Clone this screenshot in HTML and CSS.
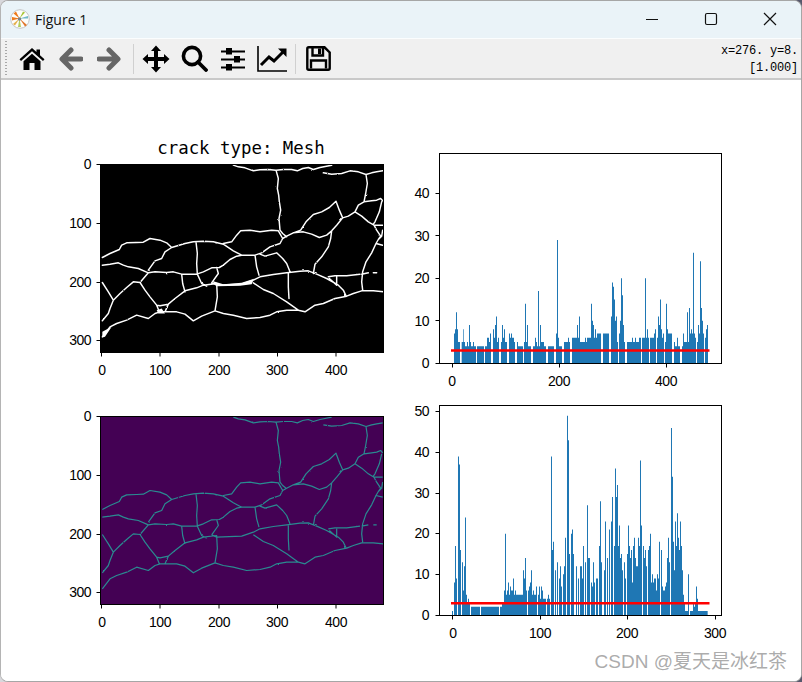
FILE: index.html
```html
<!DOCTYPE html>
<html lang="en">
<head>
<meta charset="utf-8">
<title>Figure 1</title>
<link rel="stylesheet" href="styles.css">
</head>
<body>
<div class="window">
  <header class="titlebar">
    <svg class="app-icon" width="20" height="20" viewBox="0 0 20 20">
      <circle cx="10" cy="10" r="9.3" fill="#fdfdfb" stroke="#c4c4c4"/>
      <path d="M9.5 9.5L6 2.5L3.5 4.5zM9.5 9.5L2 8L2 11.5z" fill="#ee7a1c"/>
      <path d="M9.5 9.5L13 2.5L15 3.5z" fill="#a9c639"/>
      <path d="M9.5 9.5L18 7L18 9.5z" fill="#6fb8c9"/>
      <path d="M9.5 9.5L17 16L15 17.5z" fill="#e0762c"/>
      <path d="M9.5 9.5L11 18L8 18z" fill="#b3cb5a"/>
      <path d="M9.5 9.5L3 15L5 16.5z" fill="#e5b04a"/>
      <circle cx="9.5" cy="10" r="1.8" fill="#77808a"/>
    </svg>
    <span class="title">Figure 1</span>
    <div class="controls">
      <svg class="ctl" width="14" height="14" viewBox="0 0 14 14"><path d="M1 7.5H13" class="ctl-line"/></svg>
      <svg class="ctl" width="14" height="14" viewBox="0 0 14 14"><rect x="1.5" y="1.5" width="11" height="11" rx="1.5" class="ctl-line"/></svg>
      <svg class="ctl" width="14" height="14" viewBox="0 0 14 14"><path d="M1 1L13 13M13 1L1 13" class="ctl-line"/></svg>
    </div>
  </header>
  <div class="toolbar">
    <span class="grip"></span>
    <button class="tool" aria-label="Home"><svg width="26" height="24" viewBox="0 0 26 24"><path d="M13 1L0.5 12.2L2 14L13 4.2L24 14L25.5 12.2L21 8.2V2.5H17.5V5.1zM4.5 14.3V23H10.5V16H15.5V23H21.5V14.3L13 6.7z" fill="#000"/></svg></button>
    <button class="tool" aria-label="Back"><svg width="24" height="24" viewBox="0 0 24 24"><path d="M12 3L3 12L12 21M4 12H22" class="arrow"/></svg></button>
    <button class="tool" aria-label="Forward"><svg width="24" height="24" viewBox="0 0 24 24"><path d="M12 3L21 12L12 21M20 12H2" class="arrow"/></svg></button>
    <span class="sep"></span>
    <button class="tool" aria-label="Pan"><svg width="28" height="28" viewBox="0 0 28 28"><path d="M14 0.5L19 6H16V12H22V9L27.5 14L22 19V16H16V22H19L14 27.5L9 22H12V16H6V19L0.5 14L6 9V12H12V6H9z" fill="#000"/></svg></button>
    <button class="tool" aria-label="Zoom"><svg width="27" height="27" viewBox="0 0 27 27"><circle cx="11" cy="11" r="8.6" fill="none" stroke="#000" stroke-width="3.6"/><path d="M17 17L25 25" stroke="#000" stroke-width="3.8" stroke-linecap="round"/></svg></button>
    <button class="tool" aria-label="Subplots"><svg width="26" height="24" viewBox="0 0 26 24"><path d="M1 4.5H25M1 12.5H25M1 20.5H25" stroke="#000" stroke-width="2"/><rect x="6" y="1" width="6" height="6.5" fill="#000"/><rect x="14" y="9" width="6" height="6.5" fill="#000"/><rect x="6" y="17" width="6" height="6.5" fill="#000"/></svg></button>
    <button class="tool" aria-label="Axes"><svg width="30" height="26" viewBox="0 0 30 26"><path d="M1 0V25H30" fill="none" stroke="#000" stroke-width="1.6"/><path d="M4 19L12 11L17 15L27 5" fill="none" stroke="#000" stroke-width="3"/><path d="M21 2.5H29.5V11z" fill="#000"/></svg></button>
    <span class="sep"></span>
    <button class="tool" aria-label="Save"><svg width="25" height="25" viewBox="0 0 25 25"><path d="M2.8 1.3H18.5L23.7 6.5V22.2Q23.7 23.7 22.2 23.7H2.8Q1.3 23.7 1.3 22.2V2.8Q1.3 1.3 2.8 1.3z" fill="none" stroke="#000" stroke-width="2.4"/><path d="M6.5 2V9.5H17V2" fill="none" stroke="#000" stroke-width="2.4"/><rect x="12" y="2.5" width="3" height="5.5" fill="#000"/><path d="M5 22.5V14.5H20V22.5" fill="none" stroke="#000" stroke-width="2.4"/></svg></button>
    <div class="readout">x=276. y=8.
[1.000]</div>
  </div>
  <main class="canvas">
    <svg class="figure" width="800" height="601" viewBox="1 80 800 601">
      <defs>
        <filter id="rough" filterUnits="userSpaceOnUse" x="123" y="102" width="849" height="566">
          <feTurbulence type="fractalNoise" baseFrequency="0.08" numOctaves="2" seed="4"/>
          <feDisplacementMap in="SourceGraphic" scale="5" xChannelSelector="R" yChannelSelector="G"/>
        </filter>
        <path id="cracks" d="M520 105L535 110L555 113L580 122L600 119L625 118L648 120L670 118L695 118L712 122L728 115L745 112L760 118L780 112L815 105
          M648 120L655 145L652 175L656 195L658 215L662 240L657 265L660 300L668 310L680 320
          M790 128L815 132L845 130L870 122L895 125L918 133L935 128L950 125L968 122
          M918 133L922 160L917 190L912 215L895 225L885 245M912 215L935 212L950 210L962 205L968 212M965 215L958 245L945 275L940 282
          M885 245L905 258L925 275L942 285L968 285M942 285L950 300L962 318L955 328L948 340L968 345M968 300L965 318L955 328
          M948 340L935 368L918 395L908 425L905 455L908 480
          M680 318L700 308L722 300L738 275L760 253L785 245L808 232L828 213L838 240L848 263L865 258L885 245
          M848 263L830 285L815 302L800 315L778 322L755 312L730 305L700 308
          M815 302L812 325L805 350L785 380L765 402L760 430
          M490 340L515 335L530 315L542 302L570 300L600 305L635 300L655 302L668 325L680 318
          M668 325L660 340L630 350L605 368L585 375L545 375L520 362L490 342L460 335L430 333L400 335L375 340L335 352L315 365L305 385L285 392L265 420
          M127 382L150 370L178 358L185 345L200 338L230 337L250 336L270 325L300 330L320 338L335 352
          M408 335L412 370L410 400L412 432L425 460L440 468
          M127 405L150 402L175 398L190 405L205 410L235 415L265 428L285 425L320 427L340 425L365 432L410 432L430 425L455 413L478 412L490 405L510 388L530 378L545 375
          M470 412L475 430L455 458M365 432L368 460L375 485
          M265 428L240 457L220 455L200 472L180 490L160 510L150 535L145 550L127 572M127 457L145 485L160 510
          M240 457L255 480L270 500L290 525L300 527L325 522L345 505L375 482L410 473L430 465L470 460L472 500L465 542
          M455 458L470 465L545 462L580 450L600 440L640 433L680 428L720 423L745 422L770 432L800 445L835 465L850 480L858 497
          M585 375L590 410L597 435M600 372L615 378L650 368L668 385L680 400L690 425M685 428L685 470L687 505
          M580 458L610 478L640 490L680 515L715 540
          M127 620L150 590L170 580L200 570L230 555L265 565L285 550L300 545L350 545L375 552L400 572L425 558L465 542L490 550L520 555L560 565L600 562L630 555L650 545L680 540L715 540L735 545L765 525L790 520L825 505L860 498L880 490L905 482L940 482L970 485
          M290 525L298 545M325 522L315 545M805 440L825 437L860 437L900 432M808 445L830 465L830 440M905 432L925 428M940 428L950 428"/>
      </defs>

      <text class="plot-title" x="241" y="154" text-anchor="middle">crack type: Mesh</text>

      <!-- Top image -->
      <svg x="101" y="164" width="283" height="189" viewBox="123 102 849 566">
        <rect x="123" y="102" width="849" height="566" fill="#000"/>
        <g filter="url(#rough)">
          <use href="#cracks" class="crack-white"/>
        </g>
        <path d="M455 452L490 462L545 458L582 446L575 462L540 467L470 468zM127 605L155 590L135 620L127 622zM290 540L305 535L315 550L295 550z" fill="#fff"/>
      </svg>
      <rect class="frame" x="100.5" y="164.5" width="283" height="188"/>
      <path class="ticks" d="M101.5 353V356.5M160 353V356.5M219 353V356.5M277.5 353V356.5M336 353V356.5M100 164.5H96.5M100 223.5H96.5M100 282.5H96.5M100 340.5H96.5"/>
      <g class="tick-x">
        <text x="102" y="375">0</text><text x="160" y="375">100</text><text x="219" y="375">200</text><text x="277" y="375">300</text><text x="336" y="375">400</text>
      </g>
      <g class="tick-y">
        <text x="91" y="169">0</text><text x="91" y="228">100</text><text x="91" y="287">200</text><text x="91" y="345">300</text>
      </g>

      <!-- Bottom image -->
      <svg x="101" y="416" width="283" height="189" viewBox="123 102 849 566">
        <rect x="123" y="102" width="849" height="566" fill="#440154"/>
        <g filter="url(#rough)">
          <use href="#cracks" class="crack-teal"/>
        </g>
      </svg>
      <rect class="frame" x="100.5" y="416.5" width="283" height="188"/>
      <path class="ticks" d="M101.5 605V608.5M160 605V608.5M219 605V608.5M277.5 605V608.5M336 605V608.5M100 416.5H96.5M100 475.5H96.5M100 534.5H96.5M100 592.5H96.5"/>
      <g class="tick-x">
        <text x="102" y="627">0</text><text x="160" y="627">100</text><text x="219" y="627">200</text><text x="277" y="627">300</text><text x="336" y="627">400</text>
      </g>
      <g class="tick-y">
        <text x="91" y="421">0</text><text x="91" y="480">100</text><text x="91" y="539">200</text><text x="91" y="597">300</text>
      </g>

      <!-- Top bars: x in thirds of a pixel, y in data units -->
      <g transform="translate(410 363.3) scale(0.33333 -4.25)">
        <path class="bars" d="M132 0V7H135V8H138V12H141V8H144V5H150V0z
          M155 0V5H160V8H162V5H165V4H171V5H174V4H177V9H180V5H183V4H189V5H192V4H198V0z
          M201 0V4H222V0zM225 0V4H231V6H237V5H240V7H243V0z
          M249 0V8H252V6H255V9H258V11H261V5H264V6H267V0z
          M273 0V5H276V9H279V6H282V8H285V5H291V0z
          M297 0V7H300V6H303V7H306V6H312V5H315V0z
          M321 0V5H324V4H339V0z
          M342 0V5H345V14H348V5H351V9H354V4H363V0z
          M369 0V4H375V6H378V5H381V4H384V17H387V4H390V9H393V5H402V4H408V0z
          M414 0V4H432V0z
          M438 0V7H441V29H444V6H447V4H456V0z
          M462 0V5H474V6H477V5H480V0z
          M486 0V6H501V9H504V6H507V11H510V5H525V6H528V5H531V6H543V14H546V10H549V9H552V6H555V8H558V6H561V7H573V0z
          M579 0V7H597V0z
          M603 0V11H606V19H609V18H612V15H615V10H618V11H621V5H624V0z
          M627 0V7H630V10H633V20H636V16H639V9H642V5H645V0z
          M651 0V5H666V6H669V5H675V6H678V5H687V6H693V0z
          M696 0V6H705V20H708V6H711V8H714V6H717V0z
          M720 0V6H732V7H735V8H738V0z
          M741 0V6H744V11H747V9H750V15H753V8H756V6H759V7H762V0z
          M765 0V5H768V14H771V8H774V7H786V0z
          M792 0V5H795V4H801V6H804V4H810V0z
          M816 0V4H819V7H822V5H831V12H834V5H837V13H840V7H843V8H846V7H849V26H852V7H855V6H858V0z
          M861 0V5H864V9H867V7H870V24H873V13H876V10H879V7H882V0z
          M885 0V6H888V8H891V9H894V0z"/>
      </g>
      <path class="red-line" d="M451 350.5H709.5"/>
      <rect class="frame" x="439.5" y="153.5" width="282" height="210"/>
      <path class="ticks" d="M452.5 364V367.5M559.5 364V367.5M666.5 364V367.5M439 363.5H435.5M439 320.5H435.5M439 278.5H435.5M439 235.5H435.5M439 193.5H435.5"/>
      <g class="tick-x">
        <text x="452" y="386">0</text><text x="559" y="386">200</text><text x="666" y="386">400</text>
      </g>
      <g class="tick-y">
        <text x="429" y="368">0</text><text x="429" y="326">10</text><text x="429" y="283">20</text><text x="429" y="241">30</text><text x="429" y="198">40</text>
      </g>

      <!-- Bottom bars -->
      <g transform="translate(410 615) scale(0.33333 -4.066)">
        <path class="bars" d="M126 0V1H129V0zM132 0V8H135V17H138V9H141V0z
          M144 0V39H147V37H150V16H153V0z
          M156 0V13H159V6H162V12H165V24H168V5H171V3H174V4H177V3H180V0z
          M183 0V2H210V0zM213 0V2H267V0z
          M270 0V2H276V3H282V6H285V20H288V5H291V6H294V8H297V5H300V7H303V6H309V9H312V5H315V6H318V5H339V11H342V9H345V14H348V6H351V0z
          M354 0V6H357V7H360V8H363V11H366V5H369V6H372V5H378V7H381V0z
          M384 0V5H387V7H390V4H393V7H396V6H399V4H408V0z
          M411 0V4H414V5H417V4H420V0z
          M423 0V39H426V16H429V18H432V0zM435 0V11H438V0zM441 0V13H444V0z
          M447 0V9H450V12H453V7H456V0z
          M459 0V10H462V12H465V19H468V0z
          M471 0V49H474V43H477V15H480V0z
          M483 0V20H486V21H489V15H492V0zM498 0V12H501V0zM504 0V9H507V0z
          M510 0V12H516V9H519V17H522V0zM525 0V13H528V0z
          M531 0V27H534V14H540V0z
          M543 0V8H546V7H549V13H552V8H555V0zM558 0V9H564V0z
          M567 0V17H570V28H573V13H576V0z
          M582 0V11H585V23H588V0zM591 0V14H594V0zM597 0V21H600V0z
          M603 0V23H606V29H609V0z
          M612 0V17H615V36H618V29H621V32H624V17H627V22H630V14H633V15H636V11H639V0z
          M642 0V13H645V9H648V0z
          M651 0V15H654V22H657V17H660V14H663V16H666V8H669V17H672V19H675V14H678V12H684V19H687V17H690V38H693V22H696V0z
          M699 0V17H702V14H705V16H708V12H711V0z
          M714 0V16H717V17H720V20H723V8H726V10H729V8H732V9H738V6H741V10H744V9H747V18H750V0z
          M753 0V16H756V7H759V6H765V7H768V8H771V14H774V19H777V13H780V0z
          M783 0V46H786V34H789V18H792V11H795V23H798V17H801V25H804V19H807V16H810V23H813V17H816V11H819V5H822V3H825V1H834V10H837V0z
          M840 0V1H849V3H852V2H855V3H858V7H861V4H864V1H893V0z"/>
      </g>
      <path class="red-line" d="M451 603.3H709.5"/>
      <rect class="frame" x="439.5" y="405.5" width="282" height="210"/>
      <path class="ticks" d="M452.5 616V619.5M540.5 616V619.5M627.5 616V619.5M715.5 616V619.5M439 615.5H435.5M439 574.5H435.5M439 533.5H435.5M439 493.5H435.5M439 452.5H435.5M439 411.5H435.5"/>
      <g class="tick-x">
        <text x="453" y="638">0</text><text x="540" y="638">100</text><text x="627" y="638">200</text><text x="715" y="638">300</text>
      </g>
      <g class="tick-y">
        <text x="429" y="620">0</text><text x="429" y="579">10</text><text x="429" y="538">20</text><text x="429" y="498">30</text><text x="429" y="457">40</text><text x="429" y="416">50</text>
      </g>
    </svg>
    <div class="watermark">CSDN @夏天是冰红茶</div>
  </main>
</div>
</body>
</html>
```

FILE: styles.css
```css
html, body {
  margin: 0;
  padding: 0;
}
body {
  width: 802px;
  height: 682px;
  overflow: hidden;
  background: linear-gradient(90deg, #d8d8dc 0, #d8d8dc 60%, #5a5468 60%, #7b6f5f 70%, #3d4a68 85%, #56586c 100%);
}
.window {
  box-sizing: border-box;
  width: 802px;
  height: 682px;
  display: flex;
  flex-direction: column;
  border: 1px solid #a6a6a6;
  border-left-color: #b4b4b4;
  border-radius: 8px;
  overflow: hidden;
  background: #fff;
  font-family: "Noto Sans", "Open Sans", sans-serif;
}
.titlebar {
  flex: 0 0 37px;
  display: flex;
  align-items: center;
  padding-left: 9px;
  background: #eaf3f8;
  border-bottom: 1px solid #fbfdfe;
}
.app-icon {
  flex: none;
  margin-top: -2px;
}
.title {
  margin-left: 5px;
  margin-top: -1px;
  font-family: "Open Sans", "Noto Sans", sans-serif;
  font-size: 14px;
  color: #111;
}
.controls {
  margin-left: auto;
  margin-right: 24px;
  display: flex;
  gap: 45px;
  margin-top: -2px;
}
.ctl-line {
  fill: none;
  stroke: #111;
  stroke-width: 1.2;
}
.ctl {
  display: block;
}
.toolbar {
  flex: 0 0 41px;
  box-sizing: border-box;
  display: flex;
  align-items: center;
  position: relative;
  padding-left: 4px;
  background: #f0f0f0;
  border-bottom: 2px solid #c9c9c9;
}
.grip {
  width: 2px;
  height: 34px;
  margin-right: 6px;
  margin-top: -1px;
  background: repeating-linear-gradient(180deg, #a8a8a8 0, #a8a8a8 1px, transparent 1px, transparent 3px);
  flex: none;
}
.tool {
  flex: none;
  width: 38.6px;
  height: 36px;
  padding: 0;
  border: 0;
  background: transparent;
  display: flex;
  align-items: center;
  justify-content: center;
}
.tool svg {
  display: block;
}
.arrow {
  fill: none;
  stroke: #666;
  stroke-width: 5;
  stroke-linecap: round;
  stroke-linejoin: round;
}
.sep {
  flex: none;
  width: 1px;
  height: 30px;
  background: #d0d0d0;
  margin: 0 3px 0 4px;
}
.readout {
  margin-left: auto;
  margin-right: 3px;
  margin-top: 2px;
  text-align: right;
  white-space: pre;
  font-family: "Liberation Mono", monospace;
  font-size: 12px;
  letter-spacing: -0.2px;
  line-height: 17px;
  color: #000;
}
.canvas {
  flex: 1;
  position: relative;
  background: #fff;
}
.figure {
  display: block;
}
.plot-title {
  font-family: "DejaVu Sans Mono", monospace;
  font-size: 17.4px;
  fill: #000;
}
.tick-x text,
.tick-y text {
  font-family: "Liberation Sans", sans-serif;
  font-size: 14px;
  letter-spacing: -0.5px;
  fill: #000;
}
.tick-x text {
  text-anchor: middle;
}
.tick-y text {
  text-anchor: end;
}
.frame {
  fill: none;
  stroke: #000;
  stroke-width: 1;
}
.ticks {
  fill: none;
  stroke: #000;
  stroke-width: 1;
}
.bars {
  fill: #1f77b4;
}
.red-line {
  fill: none;
  stroke: #ff0000;
  stroke-width: 2.6;
}
.crack-white {
  fill: none;
  stroke: #fff;
  stroke-width: 4.4;
  stroke-linejoin: round;
  stroke-linecap: round;
}
.crack-teal {
  fill: none;
  stroke: #2a8a90;
  stroke-width: 3.6;
  stroke-linejoin: round;
}
.watermark {
  position: absolute;
  right: 14px;
  bottom: 8px;
  font-family: "Liberation Sans", "Noto Sans CJK SC", sans-serif;
  font-size: 19px;
  color: rgba(150, 150, 150, 0.8);
}
```
